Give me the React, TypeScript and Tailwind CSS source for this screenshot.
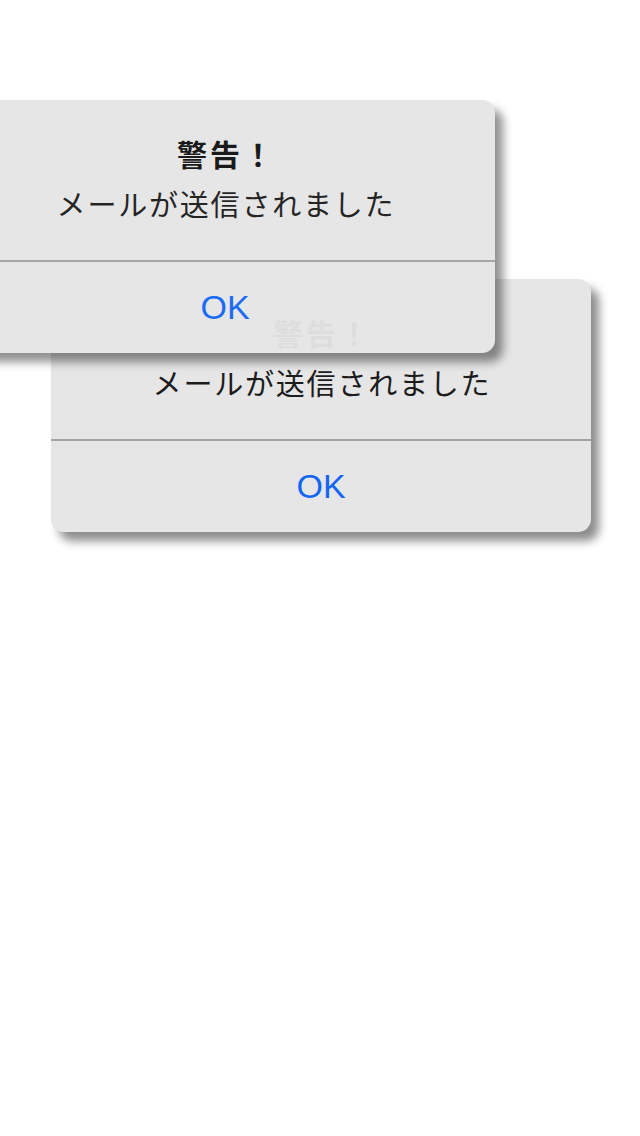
import React from "react";

function AlertBox({ className }: { className: string }) {
  return (
    <div
      className={`absolute flex w-[540px] flex-col rounded-[13px] bg-[#e6e6e6] shadow-[8px_9px_10px_rgba(0,0,0,0.45)] ${className}`}
    >
      <div className="flex h-[160px] flex-col items-center pt-[37px]">
        <h2 className="pl-[3px] text-[30px] font-bold leading-[38px] tracking-[3px] text-[#111]">警告！</h2>
        <p className="mt-[12px] pl-[2px] text-[29px] leading-[38px] tracking-[1.8px] text-[#1c1c1c]">
          メールが送信されました
        </p>
      </div>
      <div className="h-[2px] bg-[#a3a3a3]" />
      <button className="flex h-[91px] items-center justify-center text-[34px] text-[#1466f5]">
        OK
      </button>
    </div>
  );
}

export default function App() {
  return (
    <div
      className="relative h-[1136px] w-[640px] overflow-hidden bg-white"
      style={{ fontFamily: '"Liberation Sans", "Noto Sans CJK JP", sans-serif' }}
    >
      <AlertBox className="left-[51px] top-[279px] z-0" />
      <AlertBox className="left-[-45px] top-[100px] z-10 opacity-[0.96]" />
    </div>
  );
}
